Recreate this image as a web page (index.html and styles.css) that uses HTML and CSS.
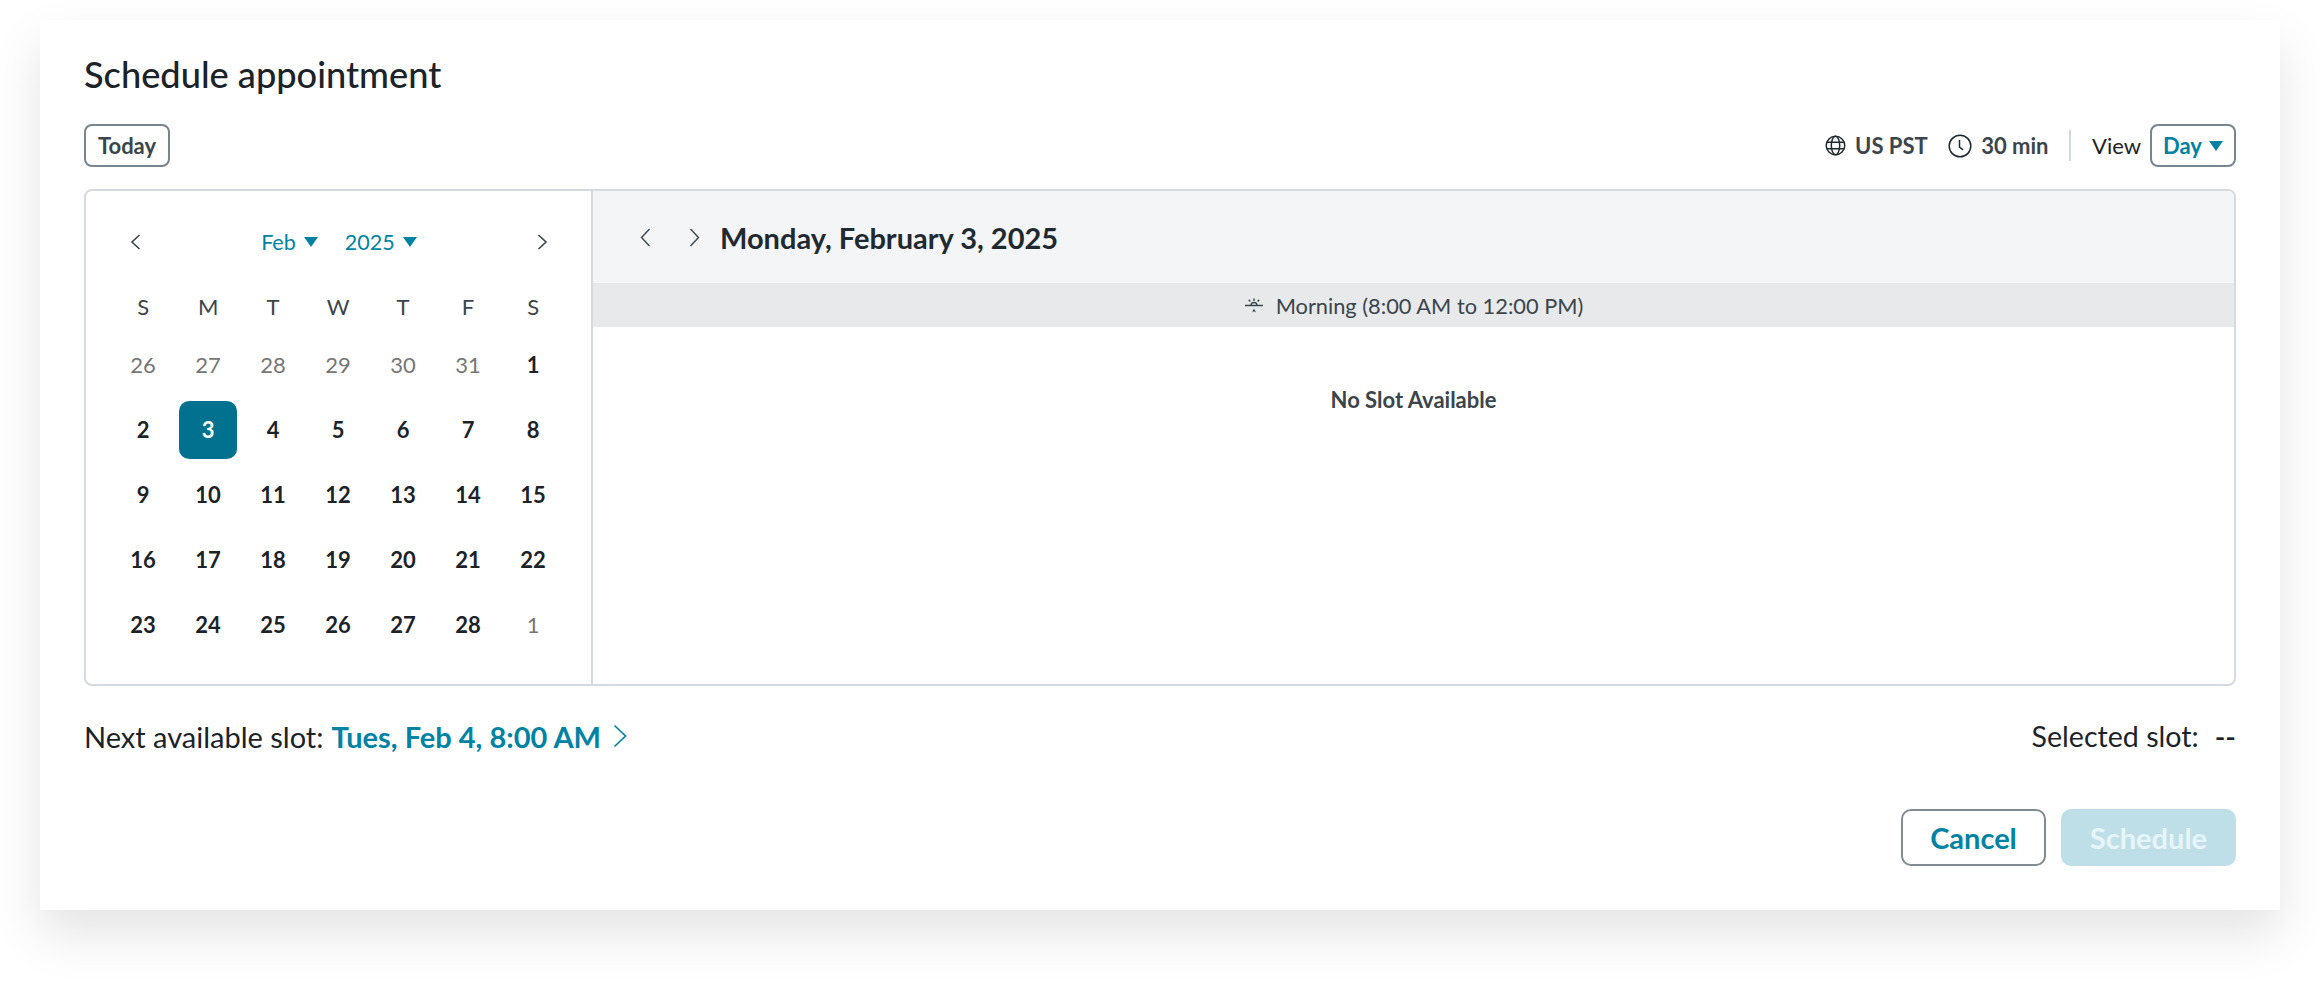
FILE: index.html
```html
<!DOCTYPE html>
<html lang="en">
<head>
<meta charset="utf-8">
<title>Schedule appointment</title>
<link rel="stylesheet" href="styles.css">
</head>
<body>
<main class="card">
  <h1 class="title">Schedule appointment</h1>
  <div class="toolbar">
    <button class="btn-small btn-today">Today</button>
    <div class="tools">
      <span class="tool">
        <svg class="ico-globe" viewBox="0 0 24 24" fill="none" stroke="#1f2a30" stroke-width="1.7"><circle cx="12" cy="12" r="10.6"/><ellipse cx="12" cy="12" rx="4.8" ry="10.6"/><path d="M2.2 8.3h19.6M2.2 15.7h19.6"/></svg>
        US PST
      </span>
      <span class="tool">
        <svg class="ico-clock" viewBox="0 0 24 24" fill="none" stroke="#1f2a30" stroke-width="1.5"><circle cx="12" cy="12" r="10.8"/><path d="M11.5 6v7.2l3.6 2.6"/></svg>
        30 min
      </span>
      <span class="sep"></span>
      <span class="view-label">View</span>
      <button class="btn-small btn-view">Day <span class="caret"></span></button>
    </div>
  </div>
  <section class="panel">
    <div class="cal">
      <div class="cal-nav">
        <svg class="chev" viewBox="0 0 11 16" fill="none" stroke="#3a454c" stroke-width="1.6"><path d="M9.5 1 2 8l7.5 7"/></svg>
        <div class="pickers">
          <span class="picker">Feb <span class="caret"></span></span>
          <span class="picker">2025 <span class="caret"></span></span>
        </div>
        <svg class="chev" viewBox="0 0 11 16" fill="none" stroke="#3a454c" stroke-width="1.6"><path d="M1.5 1 9 8l-7.5 7"/></svg>
      </div>
      <div class="grid">
        <span class="dow">S</span><span class="dow">M</span><span class="dow">T</span><span class="dow">W</span><span class="dow">T</span><span class="dow">F</span><span class="dow">S</span>
        <span class="day off">26</span><span class="day off">27</span><span class="day off">28</span><span class="day off">29</span><span class="day off">30</span><span class="day off">31</span><span class="day">1</span>
        <span class="day">2</span><span class="day sel">3</span><span class="day">4</span><span class="day">5</span><span class="day">6</span><span class="day">7</span><span class="day">8</span>
        <span class="day">9</span><span class="day">10</span><span class="day">11</span><span class="day">12</span><span class="day">13</span><span class="day">14</span><span class="day">15</span>
        <span class="day">16</span><span class="day">17</span><span class="day">18</span><span class="day">19</span><span class="day">20</span><span class="day">21</span><span class="day">22</span>
        <span class="day">23</span><span class="day">24</span><span class="day">25</span><span class="day">26</span><span class="day">27</span><span class="day">28</span><span class="day off">1</span>
      </div>
    </div>
    <div class="agenda">
      <div class="agenda-head">
        <svg class="chev-lg" viewBox="0 0 11 19" fill="none" stroke="#3a454c" stroke-width="1.4"><path d="M9.5 1 1.5 9.5l8 8.5"/></svg>
        <svg class="chev-lg" viewBox="0 0 11 19" fill="none" stroke="#3a454c" stroke-width="1.4"><path d="M1.5 1l8 8.5-8 8.5"/></svg>
        <h2 class="agenda-date">Monday, February 3, 2025</h2>
      </div>
      <div class="band">
        <svg class="sun" viewBox="0 0 20 16" fill="none" stroke="#3a454c" stroke-width="1.4"><path d="M1 7.5h18M7 7.5a3 3 0 0 1 6 0M10 .5V3M4.8 1.8l1.5 1.7M15.2 1.8l-1.5 1.7"/><path d="M8 14.5l2-4 2 4-2-1.2z" fill="#3a454c" stroke="none"/></svg>
        Morning (8:00 AM to 12:00 PM)
      </div>
      <p class="empty">No Slot Available</p>
    </div>
  </section>
  <div class="footer">
    <div class="next">Next available slot: <a class="next-link">Tues, Feb 4, 8:00 AM</a>
      <svg class="next-chev" viewBox="0 0 14 24" fill="none" stroke="#0083a3" stroke-width="1.7"><path d="M1.5 1.5 12.5 12l-11 10.5"/></svg>
    </div>
    <div class="selected"><span>Selected slot:</span><span class="dash">--</span></div>
  </div>
  <div class="actions">
    <button class="btn btn-cancel">Cancel</button>
    <button class="btn btn-primary">Schedule</button>
  </div>
</main>
</body>
</html>
```
FILE: styles.css
```css
* { box-sizing: border-box; }
html, body { margin: 0; height: 100%; overflow: hidden; background: #fff; }
body { font-family: Lato, "Noto Sans", sans-serif; color: #1b2329; }
button { font-family: inherit; cursor: pointer; }

.card {
  width: 2240px;
  height: 890px;
  margin: 20px 40px 0;
  padding: 32px 44px 0;
  background: #fff;
  box-shadow: 0 24px 48px rgba(0, 0, 0, .11);
}
.title { margin: 0; font-size: 36.2px; line-height: 44px; font-weight: 500; color: #1b2329; }

.toolbar { display: flex; justify-content: space-between; align-items: center; margin-top: 28px; height: 43px; }
.btn-small {
  height: 43px;
  border: 2px solid #76858e;
  border-radius: 8px;
  background: #fff;
  font-size: 22px;
  font-weight: 700;
  color: #3a454c;
  display: inline-flex;
  align-items: center;
  justify-content: center;
  padding: 0;
}
.btn-today { width: 86px; }
.tools { display: flex; align-items: center; }
.tool { display: flex; align-items: center; gap: 9px; font-size: 22px; font-weight: 700; color: #3a454c; margin-right: 20.5px; }
.ico-globe { width: 21px; height: 21px; flex: none; }
.ico-clock { width: 24px; height: 24px; flex: none; }
.sep { width: 2px; height: 31px; background: #d5d9dc; margin-right: 21px; }
.view-label { font-size: 22px; margin-right: 9px; color: #1b2329; }
.btn-view { color: #0083a3; gap: 7px; width: 86px; }
.caret { display: inline-block; width: 0; height: 0; border-left: 7.5px solid transparent; border-right: 7.5px solid transparent; border-top: 10px solid #0083a3; }

.panel { display: flex; margin-top: 22px; height: 497px; border: 2px solid #d5dade; border-radius: 8px; overflow: hidden; }
.cal { width: 507px; flex: none; border-right: 2px solid #d5dade; padding: 0 0 0 24.6px; }
.cal-nav { display: flex; justify-content: space-between; align-items: center; width: 455px; height: 101px; padding: 0 18px 0 19.6px; }
.chev { width: 11px; height: 16px; flex: none; }
.chev-lg { width: 11px; height: 19px; flex: none; }
.pickers { display: flex; gap: 27px; }
.picker { display: flex; align-items: center; gap: 8px; font-size: 21.5px; color: #0083a3; }

.grid { display: grid; grid-template-columns: repeat(7, 65px); grid-template-rows: 40px; grid-auto-rows: 65px; }
.dow, .day { display: flex; align-items: center; justify-content: center; font-size: 22px; }
.dow { height: 28px; align-self: start; color: #3a454c; }
.day { font-weight: 700; color: #1b2329; }
.day.off { font-weight: 400; color: #767676; }
.day.sel { width: 58px; height: 58px; justify-self: center; align-self: center; background: #00728f; color: #fff; border-radius: 10px; }

.agenda { flex: 1; min-width: 0; }
.agenda-head { display: flex; align-items: center; height: 92px; background: #f4f5f7; padding-left: 47px; gap: 38px; }
.agenda-date { margin: 0 0 0 -18px; font-size: 29px; font-weight: 700; color: #1f2a30; }
.band { display: flex; align-items: center; justify-content: center; gap: 12px; height: 44px; padding-top: 1px; background: #e8e9eb; font-size: 21.8px; color: #3a454c; }
.sun { width: 20px; height: 16px; flex: none; }
.empty { margin: 56px 0 0; text-align: center; font-size: 22px; font-weight: 700; color: #3a454c; line-height: 34px; }

.footer { display: flex; justify-content: space-between; align-items: center; margin-top: 33px; height: 34px; font-size: 29px; }
.next { display: flex; align-items: center; gap: 8px; }
.next-link { font-weight: 700; color: #0083a3; }
.next-chev { width: 14px; height: 24px; margin-left: 4px; }
.selected { display: flex; gap: 16px; font-size: 28.6px; }
.dash { font-weight: 600; }

.actions { display: flex; justify-content: flex-end; gap: 15px; margin-top: 56px; }
.btn { height: 57px; border-radius: 10px; font-size: 29px; font-weight: 700; }
.btn-cancel { width: 145px; background: #fff; border: 2px solid #808b92; color: #0083a3; }
.btn-primary { width: 175px; background: #bfdfe8; border: 0; color: #e8f5f8; }
```
